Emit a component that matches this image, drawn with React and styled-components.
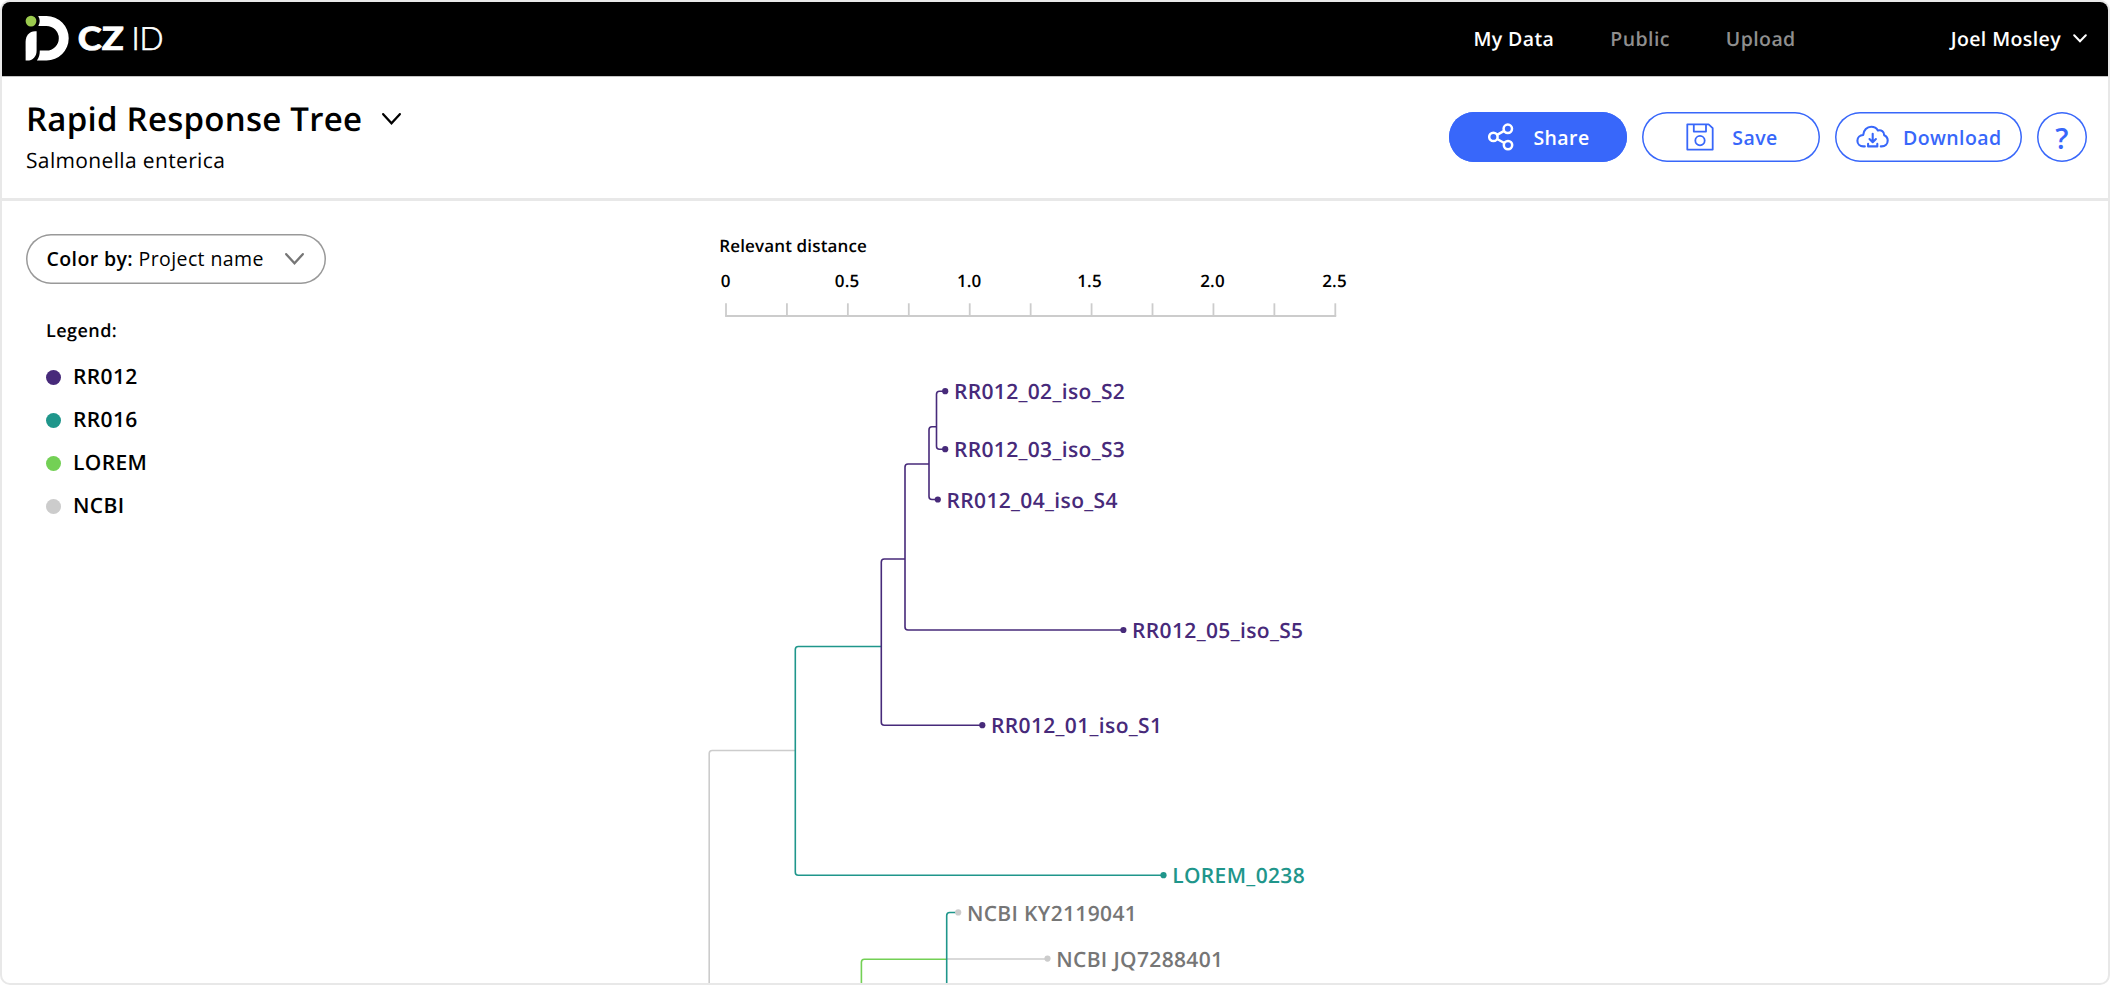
import React from "react";
import styled, { createGlobalStyle } from "styled-components";

const colors = {
  line: "#e8e8e8",
  primary: "#3867fa",
  purple: "#472a7a",
  teal: "#1f968b",
  green: "#73d055",
  gray: "#cccccc",
  grayText: "#767676",
};

const GlobalStyle = createGlobalStyle`
  *, *::before, *::after { box-sizing: border-box; }
  body {
    margin: 0;
    background: #fff;
    color: #000;
    font-family: "Open Sans", "Noto Sans", sans-serif;
    font-size: 19.5px;
    text-rendering: geometricPrecision;
  }
`;

const Frame = styled.div`
  display: flex;
  flex-direction: column;
  width: 100%;
  height: 985px;
  border: 2px solid ${colors.line};
  border-radius: 10px;
  overflow: hidden;
  background: #fff;
`;

const TopBar = styled.header`
  flex: none;
  display: flex;
  align-items: center;
  height: 75px;
  padding: 0 21px 2px 23px;
  background: #000;
  border-bottom: 1px solid #c4c4c4;
`;

const Brand = styled.a`
  display: flex;
  align-items: center;
  color: #fff;
`;

const Nav = styled.nav`
  display: flex;
  gap: 56px;
  margin-left: auto;
`;

const NavItem = styled.a`
  font-weight: 600;
  letter-spacing: 0.4px;
  color: ${(p) => (p.$active ? "#fff" : "#8f8f8f")};
`;

const UserMenu = styled.div`
  display: flex;
  align-items: center;
  gap: 12px;
  margin-left: 155px;
  color: #fff;
  font-weight: 600;
  letter-spacing: 0.4px;
`;

const PageHeader = styled.section`
  flex: none;
  display: flex;
  justify-content: space-between;
  height: 124px;
  padding: 20px 21px 0 24px;
  border-bottom: 3px solid ${colors.line};
`;

const TitleRow = styled.div`
  display: flex;
  align-items: center;
  gap: 19.5px;
`;

const Title = styled.h1`
  margin: 0;
  font-size: 33px;
  line-height: 44px;
  font-weight: 600;
  letter-spacing: 0.25px;
`;

const Subtitle = styled.p`
  margin: 6px 0 0;
  font-size: 21px;
  line-height: 28px;
  letter-spacing: 0.35px;
`;

const Actions = styled.div`
  display: flex;
  gap: 15px;
  padding-top: 15px;
`;

const Button = styled.button`
  display: flex;
  align-items: center;
  justify-content: center;
  gap: ${(p) => p.$gap}px;
  width: ${(p) => p.$width}px;
  height: 50px;
  padding: 0 0 0 ${(p) => p.$shift || 0}px;
  border: 0;
  border-radius: 25px;
  box-shadow: inset 0 0 0 1.5px ${colors.primary};
  background: ${(p) => (p.$filled ? colors.primary : "#fff")};
  color: ${(p) => (p.$filled ? "#fff" : colors.primary)};
  font: inherit;
  font-size: ${(p) => p.$size || 19.5}px;
  font-weight: 600;
  letter-spacing: 0.4px;
`;

const Content = styled.main`
  flex: 1;
  display: flex;
  min-height: 0;
  overflow: hidden;
`;

const Sidebar = styled.aside`
  flex: none;
  width: 688px;
  padding: 32.5px 24px;
`;

const Select = styled.button`
  display: flex;
  align-items: center;
  justify-content: space-between;
  width: 300px;
  height: 50.5px;
  padding: 0 22px 0 20.5px;
  border: 0;
  border-radius: 26px;
  box-shadow: inset 0 0 0 1.5px #999;
  background: #fff;
  color: #000;
  font: inherit;
  letter-spacing: 0.4px;
  text-align: left;
`;

const SelectLabel = styled.b`
  font-weight: 600;
`;

const Legend = styled.section`
  padding: 35px 0 0 20px;
`;

const LegendTitle = styled.h2`
  margin: 0 0 12.5px;
  font-size: 18px;
  line-height: 24px;
  font-weight: 600;
  letter-spacing: 0.45px;
`;

const LegendList = styled.ul`
  margin: 0;
  padding: 0;
  list-style: none;
`;

const LegendItem = styled.li`
  display: flex;
  align-items: center;
  gap: 12px;
  height: 43px;
  font-size: 21px;
  font-weight: 600;
  letter-spacing: 0.35px;
`;

const Dot = styled.span`
  width: 15px;
  height: 15px;
  border-radius: 50%;
  background: ${(p) => p.$color};
`;

const Chart = styled.svg`
  flex: none;
  display: block;
`;

const AxisText = styled.text`
  font-size: 17px;
  font-weight: 600;
  letter-spacing: 0.15px;
`;

const LeafText = styled.text`
  font-size: 21px;
  font-weight: 600;
  letter-spacing: 0.35px;
`;

const BrandText = styled.text`
  fill: #fff;
  stroke: #fff;
  stroke-width: 0.7px;
  font-family: Lato, sans-serif;
  font-size: 32px;
  font-weight: ${(p) => p.$weight};
`;

const Chevron = ({ width = 18, height = 11, stroke = 2.3, color = "currentColor" }) => (
  <svg width={width} height={height} viewBox={`0 0 ${width} ${height}`} fill="none">
    <path
      d={`M1.2 1.2 L${width / 2} ${height - 1.8} L${width - 1.2} 1.2`}
      stroke={color}
      strokeWidth={stroke}
      strokeLinecap="round"
    />
  </svg>
);

const Logo = () => (
  <svg width="160" height="60" viewBox="25 9 160 60">
    <circle cx="31" cy="22.1" r="5.4" fill="#9bca4e" />
    <path d="M36.6 32.2V51.5C36.6 57.6 33 61.6 27 61.6H25.6V43C25.6 36.5 29.5 32.2 35 32.2Z" fill="#fff" />
    <path
      d="M38.2 17H46.5A22.2 22.2 0 0 1 46.5 61.4H36.9C39 58.8 39.8 55.8 39.8 51.6H46.5A12.3 12.3 0 0 0 46.5 27H38.3C40.2 24 40.2 20 38.2 17Z"
      fill="#fff"
    />
    <BrandText x="77.8" y="50.9" $weight="900" textLength="46" lengthAdjust="spacingAndGlyphs">
      CZ
    </BrandText>
    <BrandText x="131.4" y="50.9" $weight="300" textLength="32.2" lengthAdjust="spacingAndGlyphs">
      ID
    </BrandText>
  </svg>
);

const ShareIcon = () => (
  <svg width="26" height="28" viewBox="0 0 26 28" fill="none" stroke="currentColor" strokeWidth="2.5">
    <circle cx="19.8" cy="5.8" r="4.2" />
    <circle cx="5.4" cy="13.9" r="4.2" />
    <circle cx="20" cy="22.1" r="4.2" />
    <path d="M9.1 11.8L16.1 7.9M9.1 16L16.3 20" />
  </svg>
);

const SaveIcon = () => (
  <svg width="28" height="28" viewBox="0 0 28 28" fill="none" stroke="currentColor" strokeWidth="1.8" strokeLinejoin="round">
    <path d="M1.3 1.3H22.6L26.7 5.2V26.6H1.3Z" />
    <path d="M7.8 1.3V8.6H20V1.3" />
    <circle cx="14" cy="17.6" r="4.7" />
  </svg>
);

const DownloadIcon = () => (
  <svg
    width="33"
    height="24"
    viewBox="0 0 33 24"
    fill="none"
    stroke="currentColor"
    strokeWidth="2.1"
    strokeLinecap="round"
    strokeLinejoin="round"
  >
    <path d="M8.8 21.4H7.3C3.9 21.4 1.4 18.9 1.4 15.7C1.4 12.6 3.9 10.2 7.2 10C7.6 5.1 11 1.8 15.2 1.8C18.2 1.8 20.5 3.1 21.9 5.5C25.1 4.4 28.3 6.6 28.2 10.2C30.4 11.2 31.7 13.2 31.7 15.6C31.7 18.9 29.3 21.4 25.6 21.4H24.8" />
    <path d="M16.7 8.8V16.8M13.5 14L16.7 17.2L19.9 14M12.1 18.9V21.4H21.3V18.9" />
  </svg>
);

const legend = [
  ["RR012", colors.purple],
  ["RR016", colors.teal],
  ["LOREM", colors.green],
  ["NCBI", colors.gray],
];

const axis = [
  ["0", 725.6],
  ["0.5", 847.1],
  ["1.0", 969.2],
  ["1.5", 1089.5],
  ["2.0", 1212.5],
  ["2.5", 1334.5],
];

const branches = [
  [colors.gray, "M709.2 985V753.5Q709.2 750.5 712.2 750.5H795.3"],
  [colors.teal, "M881.3 646.5H798.3Q795.3 646.5 795.3 649.5V872.2Q795.3 875.2 798.3 875.2H1163.5"],
  [colors.purple, "M905 559H884.3Q881.3 559 881.3 562V722.2Q881.3 725.2 884.3 725.2H982.3"],
  [colors.purple, "M929 464H908Q905 464 905 467V627Q905 630 908 630H1123.4"],
  [colors.purple, "M936.5 426.8H932Q929 426.8 929 429.8V496.5Q929 499.5 932 499.5H938"],
  [colors.purple, "M945 391.2H939.5Q936.5 391.2 936.5 394.2V446.2Q936.5 449.2 939.5 449.2H945"],
  [colors.gray, "M946.7 959H1047.5"],
  [colors.green, "M861.4 985V962.2Q861.4 959.2 864.4 959.2H946.7"],
  [colors.teal, "M946.7 985V915.5Q946.7 912.5 949.7 912.5H957"],
];

const leaves = [
  ["RR012_02_iso_S2", 945.2, 391.2, colors.purple],
  ["RR012_03_iso_S3", 945.2, 449.2, colors.purple],
  ["RR012_04_iso_S4", 937.8, 499.5, colors.purple],
  ["RR012_05_iso_S5", 1123.4, 630, colors.purple],
  ["RR012_01_iso_S1", 982.3, 725.2, colors.purple],
  ["LOREM_0238", 1163.5, 875.2, colors.teal],
  ["NCBI KY2119041", 958.2, 912.4, colors.gray, colors.grayText],
  ["NCBI JQ7288401", 1047.5, 958.6, colors.gray, colors.grayText],
];

const TreeChart = () => (
  <Chart width="700" height="782" viewBox="690 201 700 782">
    <AxisText x="719.2" y="252">Relevant distance</AxisText>
    {axis.map(([label, x]) => (
      <AxisText key={label} x={x} y="287.4" textAnchor="middle">
        {label}
      </AxisText>
    ))}
    <g stroke={colors.gray} strokeWidth="1.8" fill="none">
      <path d="M725.1 316H1336.2" />
      {Array.from({ length: 11 }, (_, i) => (
        <path key={i} d={`M${726 + i * 60.93} 303.3V316`} />
      ))}
    </g>
    <g fill="none" strokeWidth="1.6">
      {branches.map(([color, d]) => (
        <path key={d} d={d} stroke={color} />
      ))}
    </g>
    {leaves.map(([name, x, y, color, textColor]) => (
      <g key={name}>
        <circle cx={x} cy={y} r="3.1" fill={color} />
        <LeafText x={x + 8.7} y={y + 8.2} fill={textColor || color}>
          {name}
        </LeafText>
      </g>
    ))}
  </Chart>
);

export default function App() {
  return (
    <>
      <GlobalStyle />
      <Frame>
        <TopBar>
          <Brand>
            <Logo />
          </Brand>
          <Nav>
            <NavItem $active>My Data</NavItem>
            <NavItem>Public</NavItem>
            <NavItem>Upload</NavItem>
          </Nav>
          <UserMenu>
            Joel Mosley
            <Chevron width={14} height={9} stroke={2} />
          </UserMenu>
        </TopBar>
        <PageHeader>
          <div>
            <TitleRow>
              <Title>Rapid Response Tree</Title>
              <Chevron width={19} height={12} />
            </TitleRow>
            <Subtitle>Salmonella enterica</Subtitle>
          </div>
          <Actions>
            <Button $filled $width={178} $gap={19} $shift={3}>
              <ShareIcon />
              Share
            </Button>
            <Button $width={178} $gap={18} $shift={3}>
              <SaveIcon />
              Save
            </Button>
            <Button $width={187.5} $gap={14} $shift={1}>
              <DownloadIcon />
              Download
            </Button>
            <Button $width={50} $size={29}>
              ?
            </Button>
          </Actions>
        </PageHeader>
        <Content>
          <Sidebar>
            <Select>
              <span>
                <SelectLabel>Color by:</SelectLabel> Project name
              </span>
              <Chevron width={19} height={12} color="#767676" />
            </Select>
            <Legend>
              <LegendTitle>Legend:</LegendTitle>
              <LegendList>
                {legend.map(([name, color]) => (
                  <LegendItem key={name}>
                    <Dot $color={color} />
                    {name}
                  </LegendItem>
                ))}
              </LegendList>
            </Legend>
          </Sidebar>
          <TreeChart />
        </Content>
      </Frame>
    </>
  );
}
